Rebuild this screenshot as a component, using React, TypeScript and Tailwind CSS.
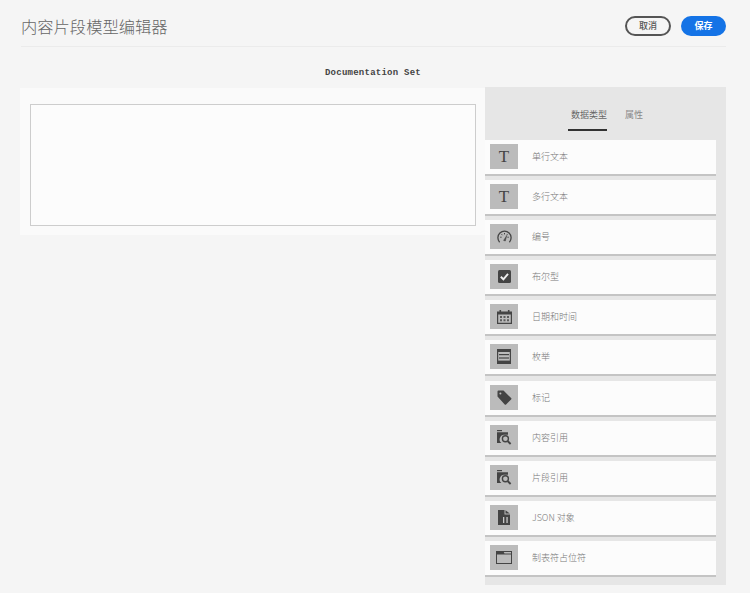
import type { ReactNode } from "react"

const cjk = "font-['Noto_Sans_CJK_SC','Noto_Sans',sans-serif]"

const TextIcon = () => (
  <span className="font-['Liberation_Serif',serif] text-[17px] leading-none text-[#444]">T</span>
)

const GaugeIcon = () => (
  <svg width="15" height="13" viewBox="0 0 15 13" fill="none" stroke="#444">
    <path d="M2.6 12.2 A6.6 6.6 0 1 1 12.4 12.2" strokeWidth="1.3" />
    <path d="M7.5 3v1.4 M3.2 7.2h1.4 M11.8 7.2h-1.4 M4.5 4.2l1 1 M10.5 4.2l-1 1" strokeWidth="1" />
    <path d="M6.6 10.4 L9.8 5.4 L8.3 11z" fill="#444" strokeWidth="0.5" />
  </svg>
)

const CheckIcon = () => (
  <svg width="13" height="13" viewBox="0 0 13 13">
    <rect width="13" height="13" rx="1.5" fill="#444" />
    <path d="M2.8 6.8 L5.4 9.3 L10 3.8" fill="none" stroke="#eee" strokeWidth="1.9" />
  </svg>
)

const CalendarIcon = () => (
  <svg width="15" height="14" viewBox="0 0 15 14" fill="#444">
    <rect x="2.5" y="0" width="1.6" height="2.5" />
    <rect x="10.9" y="0" width="1.6" height="2.5" />
    <path fillRule="evenodd" d="M0 1.5h15V14H0z M1.2 4.5v8.3h12.6V4.5z" />
    <path d="M3 6h2v2H3z M6.5 6h2v2h-2z M10 6h2v2h-2z M3 9.3h2v2H3z M6.5 9.3h2v2h-2z M10 9.3h2v2h-2z" opacity="0.8" />
  </svg>
)

const EnumIcon = () => (
  <svg width="14" height="15" viewBox="0 0 14 15" fill="#444">
    <rect width="14" height="3" />
    <rect x="2" y="5" width="10" height="1.2" />
    <rect x="2" y="8.4" width="10" height="1.2" />
    <rect y="11.6" width="14" height="3.4" />
    <rect y="3" width="1.2" height="9" />
    <rect x="12.8" y="3" width="1.2" height="9" />
  </svg>
)

const TagIcon = () => (
  <svg width="15" height="15" viewBox="0 0 15 15">
    <path d="M0.5 1.5 a1 1 0 0 1 1-1 h5 l7.6 7.6 a1 1 0 0 1 0 1.4 l-5 5 a1 1 0 0 1-1.4 0 L0.5 6.6z" fill="#444" />
    <circle cx="3.4" cy="3.4" r="1" fill="#bbb" />
  </svg>
)

const FolderSearchIcon = () => (
  <svg width="16" height="15" viewBox="0 0 16 15">
    <path d="M1 0h5v1.2H1z" fill="#444" />
    <path d="M1 2.2h11v2.6H7.6A4.6 4.6 0 0 0 5.4 13H1z" fill="#444" />
    <circle cx="9.4" cy="8.8" r="3" fill="none" stroke="#444" strokeWidth="1.4" />
    <path d="M11.6 11l3 3" stroke="#444" strokeWidth="1.8" />
  </svg>
)

const JsonIcon = () => (
  <svg width="12" height="15" viewBox="0 0 12 15" fill="#444">
    <path d="M0 0h6.5v4.5H12V15H0z M7.5 0.2 L11.8 3.5H7.5z" />
    <path d="M5 7h1.3v6H5z M8.4 7h1.3v6H8.4z" fill="#c8c8c8" />
  </svg>
)

const TabIcon = () => (
  <svg width="16" height="13" viewBox="0 0 16 13">
    <rect x="0.5" y="0.5" width="15" height="12" fill="none" stroke="#444" />
    <path d="M0.5 0.5h7l1 2h7v1h-15z" fill="#444" />
  </svg>
)

const items: { label: string; icon: ReactNode }[] = [
  { label: "单行文本", icon: <TextIcon /> },
  { label: "多行文本", icon: <TextIcon /> },
  { label: "编号", icon: <GaugeIcon /> },
  { label: "布尔型", icon: <CheckIcon /> },
  { label: "日期和时间", icon: <CalendarIcon /> },
  { label: "枚举", icon: <EnumIcon /> },
  { label: "标记", icon: <TagIcon /> },
  { label: "内容引用", icon: <FolderSearchIcon /> },
  { label: "片段引用", icon: <FolderSearchIcon /> },
  { label: "JSON 对象", icon: <JsonIcon /> },
  { label: "制表符占位符", icon: <TabIcon /> },
]

const App = () => {
  return (
    <div className={`h-[593px] w-[750px] overflow-hidden bg-[#f5f5f5] pt-[16px] pl-[20px] pr-[24px] ${cjk}`}>
      {/* Header */}
      <div className="ml-[1px] flex h-[31px] items-start justify-between border-b border-[#ebebeb]">
        <h1 className="text-[16.3px] leading-[20px] font-light text-[#666]">内容片段模型编辑器</h1>
        <div className="flex gap-[10px]">
          <button className="flex h-[20px] w-[46px] items-center justify-center rounded-full border-2 border-[#555] text-[9px] font-medium text-[#555]">取消</button>
          <button className="flex h-[20px] w-[45px] items-center justify-center rounded-full bg-[#1473e6] text-[9px] font-bold text-white">保存</button>
        </div>
      </div>

      <div className="mt-[20px] h-[12px] text-center font-['Liberation_Mono',monospace] text-[9px] leading-[12px] font-bold tracking-[0.25px] text-[#444]">
        Documentation Set
      </div>

      {/* Canvas and sidebar */}
      <div className="mt-[8px] flex items-start">
        <div className="mt-[1px] h-[147px] w-[465px] bg-[#fafafa] pt-[16px] pl-[10px] pr-[9px]">
          <div className="h-[122px] border border-[#cdcdcd] bg-[#fcfcfc]" />
        </div>

        <div className="h-[498px] w-[241px] bg-[#e6e6e6]">
          <div className="flex h-[53px] items-start gap-[18px] pl-[83px] pt-[20px]">
            <div className="flex h-[24px] w-[39px] items-start justify-end border-b-2 border-[#333] text-[9px] leading-[16px] whitespace-nowrap text-[#666]">数据类型</div>
            <div className="text-[9px] leading-[16px] text-[#8a8a8a]">属性</div>
          </div>
          <div className="flex w-[231px] flex-col gap-[4.1px]">
            {items.map((item) => (
              <div key={item.label} className="flex h-[36px] items-start border-b-2 border-[#c4c4c4] bg-[#fcfcfc] pt-[4px] pl-[5px]">
                <div className="flex h-[25px] w-[28px] items-center justify-center bg-[#bbb]">{item.icon}</div>
                <span className="ml-[14px] text-[9px] leading-[25px] font-light text-[#777]">{item.label}</span>
              </div>
            ))}
          </div>
        </div>
      </div>
    </div>
  )
}

export default App
